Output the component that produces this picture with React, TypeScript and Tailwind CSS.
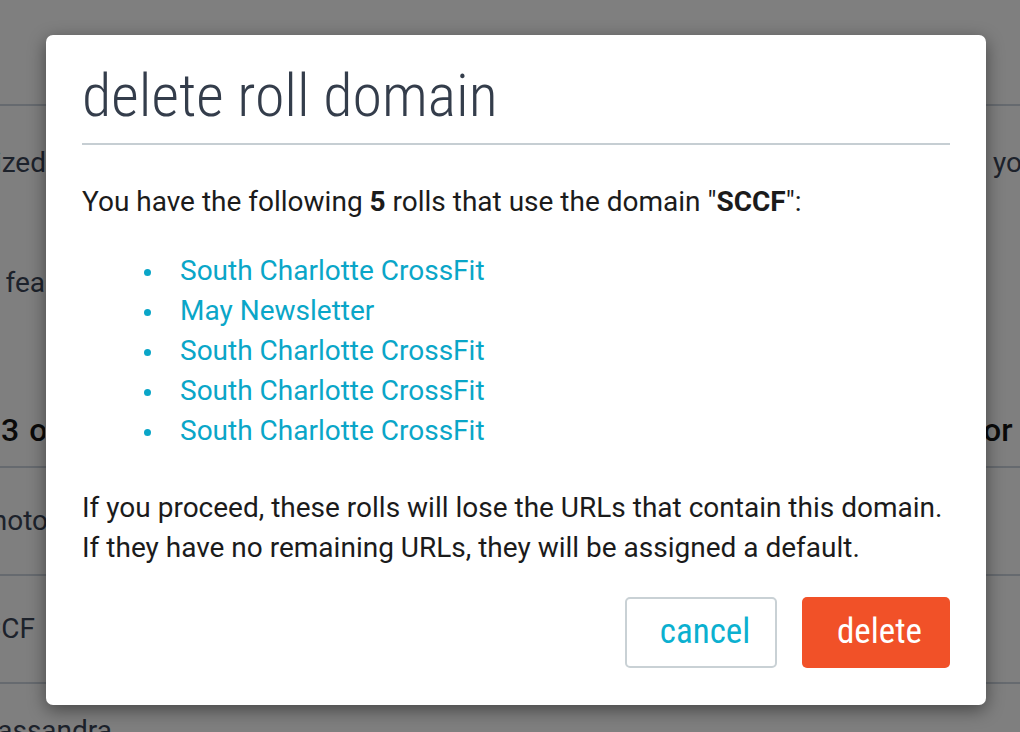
import React from "react";

const font = { fontFamily: "Roboto, 'Liberation Sans', sans-serif" };
const condensed = { fontFamily: "'Roboto Condensed', Roboto, 'Liberation Sans', sans-serif" };

function Frag({ left, right, lw = 46, rpl = 0 }: { left?: React.ReactNode; right?: React.ReactNode; lw?: number; rpl?: number }) {
  return (
    <div className="flex justify-between items-center h-full">
      <div className="overflow-hidden flex justify-end whitespace-nowrap" style={{ width: lw }}>
        <span>{left}</span>
      </div>
      <div className="w-[34px] overflow-hidden whitespace-nowrap" style={{ paddingLeft: rpl }}>
        {right}
      </div>
    </div>
  );
}

export default function App() {
  const rolls = [
    "South Charlotte CrossFit",
    "May Newsletter",
    "South Charlotte CrossFit",
    "South Charlotte CrossFit",
    "South Charlotte CrossFit",
  ];
  return (
    <div className="relative w-[1020px] h-[732px] overflow-hidden bg-white" style={font}>
      {/* page behind the dialog */}
      <div className="flex flex-col text-[28px] text-[#3b4557]">
        <div className="h-[106px] border-b-2 border-[#cdd5de]" />
        <div className="h-[40px] mt-[37px] leading-[40px]">
          <Frag left="customized" right="you" lw={46} rpl={7} />
        </div>
        <div className="h-[40px] mt-[80px] leading-[40px]">
          <Frag left="use this fea" right="" lw={45} />
        </div>
        <div className="h-[40px] mt-[107px] leading-[40px] text-[32px] font-medium text-[#141414]">
          <div className="flex justify-between items-center h-full">
            <div className="w-[45px] pl-[1px] overflow-hidden whitespace-nowrap tracking-[1px]">3 of</div>
            <div className="w-[34px] overflow-hidden whitespace-nowrap">
              <span className="-ml-[3px]">or</span>
            </div>
          </div>
        </div>
        <div className="h-[108px] mt-[16px] border-t-2 border-[#cdd5de]">
          <Frag left="photo" right="" lw={48} />
        </div>
        <div className="h-[108px] border-t-2 border-[#cdd5de]">
          <Frag left="SCCF" right="" lw={35} />
        </div>
        <div className="h-[108px] border-t-2 border-[#cdd5de] pt-[26px]">
          <div className="w-[112px] overflow-hidden flex justify-end whitespace-nowrap">
            <span>Cassandra</span>
          </div>
        </div>
      </div>

      {/* overlay + dialog */}
      <div className="absolute inset-0 bg-black/50 pl-[46px] pt-[35px]">
        <div className="w-[940px] h-[670px] bg-white rounded-[7px] shadow-[0_5px_18px_rgba(0,0,0,0.45)] px-[36px] pt-[28px] flex flex-col">
          <h1
            className="text-[60px] leading-[66px] font-light text-[#343d4b] font-stretch-condensed"
            style={condensed}
          >
            delete roll domain
          </h1>
          <div className="mt-[14px] h-[2px] bg-[#c6ced3]" />
          <p className="mt-[37px] text-[28px] leading-[40px] text-[#1b1b1b]">
            You have the following <b className="font-bold">5</b> rolls that use the domain "
            <b className="font-bold">SCCF</b>":
          </p>
          <ul className="mt-[29px] flex flex-col">
            {rolls.map((r, i) => (
              <li key={i} className="flex items-center h-[40px] text-[28px] leading-[40px] text-[#0aa6c8]">
                <span className="ml-[62px] mt-[3px] w-[7px] h-[7px] rounded-full bg-[#0aa6c8]" />
                <span className="ml-[29px]">{r}</span>
              </li>
            ))}
          </ul>
          <p className="mt-[37px] text-[28px] leading-[40px] text-[#1b1b1b]">
            If you proceed, these rolls will lose the URLs that contain this domain.
            <br />
            If they have no remaining URLs, they will be assigned a default.
          </p>
          <div className="mt-[29px] flex justify-end gap-[25px]">
            <button
              className="w-[152px] h-[71px] pl-[8px] pb-[1px] border-2 border-[#c9d1d5] rounded-[5px] bg-white text-[#0bb0d0] text-[35px] font-stretch-condensed"
              style={condensed}
            >
              cancel
            </button>
            <button
              className="w-[148px] h-[71px] pl-[7px] pb-[1px] rounded-[5px] bg-[#f15128] text-white text-[35px] font-stretch-condensed"
              style={condensed}
            >
              delete
            </button>
          </div>
        </div>
      </div>
    </div>
  );
}
